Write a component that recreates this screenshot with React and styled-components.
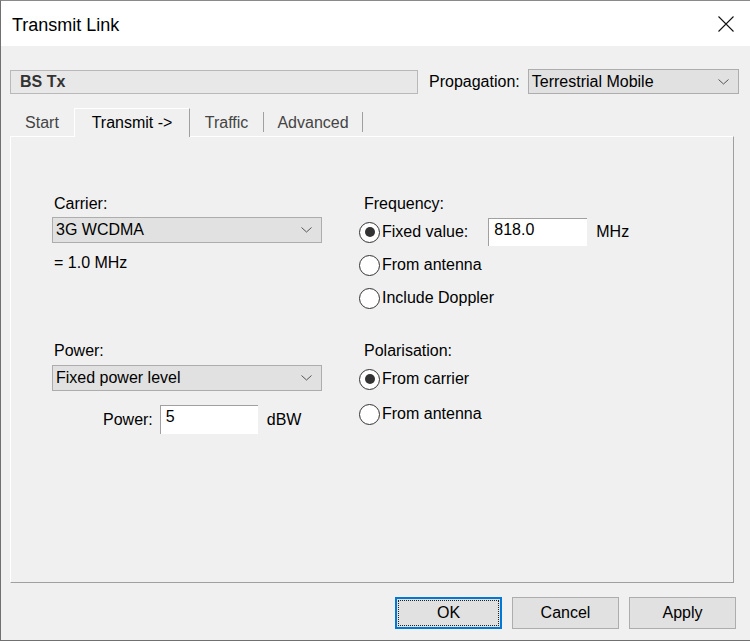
import styled, { createGlobalStyle } from "styled-components";

const GlobalStyle = createGlobalStyle`
  html, body {
    margin: 0;
    padding: 0;
    background: #f0f0f0;
  }
  * {
    box-sizing: border-box;
  }
`;

const Window = styled.div`
  width: 750px;
  height: 641px;
  display: flex;
  flex-direction: column;
  background: #f0f0f0;
  border-left: 1px solid #707070;
  border-top: 1px solid #8a8a8a;
  border-bottom: 1px solid #707070;
  font-family: "Liberation Sans", Arial, sans-serif;
  font-size: 16px;
  color: #000;
`;

const TitleBar = styled.div`
  height: 45px;
  flex-shrink: 0;
  background: #fff;
  display: flex;
  align-items: center;
  justify-content: space-between;
  padding: 3px 16px 0 11px;
  font-size: 18px;
`;

const CloseIcon = styled.svg`
  width: 16px;
  height: 16px;
  display: block;
  margin-top: -2px;
`;

const Body = styled.div`
  flex: 1;
  display: flex;
  flex-direction: column;
  padding: 23px 0 0 9px;
`;

const TopRow = styled.div`
  display: flex;
  align-items: center;
`;

const NameField = styled.div`
  width: 408px;
  height: 24px;
  background: #e8e8e8;
  border: 1px solid #b9b9b9;
  padding-left: 9px;
  display: flex;
  align-items: center;
  font-weight: bold;
  color: #333;
`;

const Label = styled.span`
  margin-left: ${(p) => p.$indent || 0}px;
  margin-right: ${(p) => p.$after || 0}px;
  white-space: nowrap;
`;

const Combo = styled.div`
  width: ${(p) => p.$width}px;
  height: ${(p) => p.$height || 26}px;
  margin-top: ${(p) => p.$top || 0}px;
  background: #e1e1e1;
  border: 1px solid #adadad;
  display: flex;
  align-items: center;
  justify-content: space-between;
  padding: 0 9px 0 3px;
`;

const Chevron = styled.svg`
  width: 11px;
  height: 6px;
  display: block;
`;

const TabStrip = styled.div`
  display: flex;
  align-items: flex-end;
  height: 28px;
  margin-top: 14px;
  position: relative;
  z-index: 1;
`;

const Tab = styled.div`
  width: ${(p) => p.$width}px;
  display: flex;
  align-items: center;
  justify-content: center;
  padding-top: 2px;
  color: #444;
  height: 20px;
  margin-bottom: 4px;
  border-right: ${(p) => (p.$sep ? "1px solid #a0a0a0" : "none")};
`;

const ActiveTab = styled.div`
  width: ${(p) => p.$width}px;
  height: 29px;
  margin-bottom: -1px;
  display: flex;
  align-items: center;
  justify-content: center;
  background: #f0f0f0;
  border-top: 1px solid #fff;
  border-left: 1px solid #fff;
  border-right: 1px solid #a0a0a0;
`;

const Panel = styled.div`
  width: 724px;
  height: 447px;
  border-top: 1px solid #fff;
  border-left: 1px solid #fff;
  border-right: 1px solid #a0a0a0;
  border-bottom: 1px solid #a0a0a0;
  display: flex;
  padding: 58px 0 0 41px;
`;

const Column = styled.div`
  display: flex;
  flex-direction: column;
  width: ${(p) => p.$width}px;
`;

const Text = styled.div`
  height: 18px;
  line-height: 18px;
  margin-top: ${(p) => p.$top || 0}px;
  padding-left: ${(p) => p.$indent || 0}px;
  white-space: nowrap;
`;

const FieldRow = styled.div`
  display: flex;
  align-items: center;
  height: ${(p) => p.$height || 22}px;
  margin-top: ${(p) => p.$top || 0}px;
`;

const Input = styled.div`
  width: ${(p) => p.$width}px;
  height: ${(p) => p.$height}px;
  background: #fff;
  border-top: 1px solid #a0a0a0;
  border-left: 1px solid #a0a0a0;
  padding: 2px 0 0 5px;
  line-height: 18px;
  margin-left: ${(p) => p.$left || 0}px;
  margin-right: ${(p) => p.$right || 0}px;
  align-self: flex-start;
`;

const Radio = styled.span`
  width: 21px;
  height: 21px;
  margin-left: 1px;
  border-radius: 50%;
  border: 1px solid #333;
  background: #fff;
  display: inline-flex;
  align-items: center;
  justify-content: center;
  margin-right: 2px;
  flex-shrink: 0;

  &::after {
    content: "";
    width: 10px;
    height: 10px;
    border-radius: 50%;
    background: ${(p) => (p.$checked ? "#333" : "transparent")};
  }
`;

const Footer = styled.div`
  display: flex;
  justify-content: flex-end;
  gap: 10px;
  padding: 14px 14px 0 0;
`;

const Button = styled.div`
  width: 107px;
  height: 32px;
  background: #e1e1e1;
  border: ${(p) => (p.$default ? "2px solid #0078d7" : "1px solid #adadad")};
  display: flex;
  align-items: center;
  justify-content: center;
  position: relative;

  &::before {
    content: "";
    display: ${(p) => (p.$default ? "block" : "none")};
    position: absolute;
    inset: 1px;
    border: 1px dotted #222;
  }
`;

const ChevronDown = () => (
  <Chevron viewBox="0 0 11 6">
    <polyline points="0.5,0.5 5.5,5 10.5,0.5" fill="none" stroke="#555" strokeWidth="1" />
  </Chevron>
);

const RadioOption = ({ checked, children, top, height }) => (
  <FieldRow $top={top} $height={height}>
    <Radio $checked={checked} />
    {children}
  </FieldRow>
);

export default function App() {
  return (
    <>
      <GlobalStyle />
      <Window>
        <TitleBar>
          <span>Transmit Link</span>
          <CloseIcon viewBox="0 0 16 16">
            <path d="M0.5 0.5 L15.5 15.5 M15.5 0.5 L0.5 15.5" stroke="#111" strokeWidth="1.1" fill="none" />
          </CloseIcon>
        </TitleBar>
        <Body>
          <TopRow>
            <NameField>BS Tx</NameField>
            <Label $indent={11} $after={8}>Propagation:</Label>
            <Combo $width={211} $height={25}>
              <span>Terrestrial Mobile</span>
              <ChevronDown />
            </Combo>
          </TopRow>
          <TabStrip>
            <Tab $width={64}>Start</Tab>
            <ActiveTab $width={116}>Transmit -&gt;</ActiveTab>
            <Tab $width={74} $sep>Traffic</Tab>
            <Tab $width={99} $sep>Advanced</Tab>
          </TabStrip>
          <Panel>
            <Column $width={306}>
              <Text $indent={2}>Carrier:</Text>
              <Combo $width={270} $top={4}>
                <span>3G WCDMA</span>
                <ChevronDown />
              </Combo>
              <Text $top={11} $indent={2}>= 1.0 MHz</Text>
              <Text $top={70} $indent={2}>Power:</Text>
              <Combo $width={270} $top={5}>
                <span>Fixed power level</span>
                <ChevronDown />
              </Combo>
              <FieldRow $top={14} $height={29}>
                <Label $indent={51} $after={7}>Power:</Label>
                <Input $width={98} $height={29} $right={9}>5</Input>
                <span>dBW</span>
              </FieldRow>
            </Column>
            <Column $width={300}>
              <Text $indent={6}>Frequency:</Text>
              <RadioOption checked top={5} height={28}>
                <Label $after={20}>Fixed value:</Label>
                <Input $width={99} $height={28} $right={9}>818.0</Input>
                <span>MHz</span>
              </RadioOption>
              <RadioOption top={8}>From antenna</RadioOption>
              <RadioOption top={11}>Include Doppler</RadioOption>
              <Text $top={33} $indent={6}>Polarisation:</Text>
              <RadioOption checked top={8}>From carrier</RadioOption>
              <RadioOption top={13}>From antenna</RadioOption>
            </Column>
          </Panel>
          <Footer>
            <Button $default>OK</Button>
            <Button>Cancel</Button>
            <Button>Apply</Button>
          </Footer>
        </Body>
      </Window>
    </>
  );
}
